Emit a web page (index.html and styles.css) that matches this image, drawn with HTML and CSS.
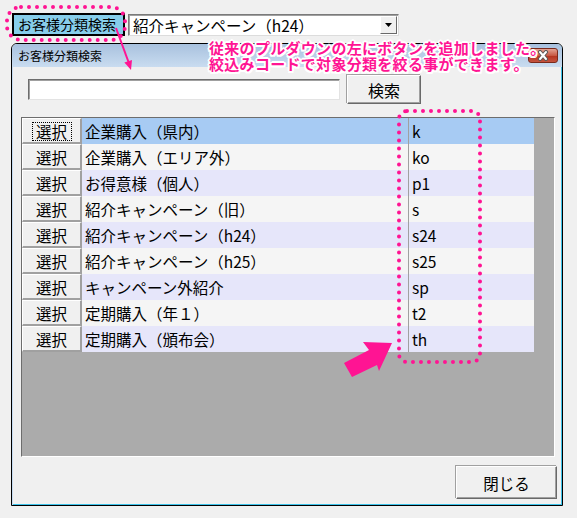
FILE: index.html
```html
<!DOCTYPE html>
<html lang="ja">
<head>
<meta charset="utf-8">
<title>お客様分類検索</title>
<link rel="stylesheet" href="styles.css">
</head>
<body>
<div class="toolbar">
  <button class="cat-btn">お客様分類検索</button>
  <div class="combo">
    <span class="combo-text">紹介キャンペーン（h24）</span>
    <span class="combo-arrow"><svg width="9" height="5" viewBox="0 0 9 5"><polygon points="1,0 8,0 4.5,4" fill="#000"/></svg></span>
  </div>
</div>

<div class="window">
  <div class="titlebar">
    <span class="title">お客様分類検索</span>
    <span class="close-x"><svg width="14" height="11" viewBox="0 0 14 11"><g stroke-linecap="round"><line x1="4" y1="2" x2="10" y2="9" stroke="#5a5a5a" stroke-width="4"/><line x1="10" y1="2" x2="4" y2="9" stroke="#5a5a5a" stroke-width="4"/><line x1="4" y1="2" x2="10" y2="9" stroke="#fff" stroke-width="2"/><line x1="10" y1="2" x2="4" y2="9" stroke="#fff" stroke-width="2"/></g></svg></span>
  </div>
  <div class="client">
    <div class="search-row">
      <div class="search-input"></div>
      <button class="btn search-btn">検索</button>
    </div>
    <div class="grid">
      <div class="row sel"><button class="pick"><span class="focus">選択</span></button><div class="name">企業購入（県内）</div><div class="code">k</div></div>
      <div class="row odd"><button class="pick">選択</button><div class="name">企業購入（エリア外）</div><div class="code">ko</div></div>
      <div class="row even"><button class="pick">選択</button><div class="name">お得意様（個人）</div><div class="code">p1</div></div>
      <div class="row odd"><button class="pick">選択</button><div class="name">紹介キャンペーン（旧）</div><div class="code">s</div></div>
      <div class="row even"><button class="pick">選択</button><div class="name">紹介キャンペーン（h24）</div><div class="code">s24</div></div>
      <div class="row odd"><button class="pick">選択</button><div class="name">紹介キャンペーン（h25）</div><div class="code">s25</div></div>
      <div class="row even"><button class="pick">選択</button><div class="name">キャンペーン外紹介</div><div class="code">sp</div></div>
      <div class="row odd"><button class="pick">選択</button><div class="name">定期購入（年１）</div><div class="code">t2</div></div>
      <div class="row even"><button class="pick">選択</button><div class="name">定期購入（頒布会）</div><div class="code">th</div></div>
    </div>
    <div class="footer">
      <button class="btn close-btn">閉じる</button>
    </div>
  </div>
</div>

<svg class="overlay" width="577" height="518" viewBox="0 0 577 518">
  <g fill="none" stroke="#ff1493" stroke-width="4" stroke-linecap="round" stroke-dasharray="0 8">
    <rect x="7" y="7" width="118" height="33" rx="14"/>
    <rect x="399" y="111" width="81" height="251" rx="8"/>
  </g>
  <line x1="116" y1="28" x2="128.5" y2="62" stroke="#ff1493" stroke-width="2"/>
  <polygon points="131,70 132,60 124.4,62.6" fill="#ff1493"/>
  <polygon points="344,363 369,350 363,342 392,343 379,371 377,365 352,377" fill="#ff1493"/>
</svg>

<div class="note">従来のプルダウンの左にボタンを追加しました。<br>絞込みコードで対象分類を絞る事ができます。</div>
</body>
</html>
```

FILE: styles.css
```css
* { box-sizing: border-box; }

body {
  margin: 0;
  width: 577px;
  height: 518px;
  overflow: hidden;
  position: relative;
  background: #f0f0f0;
  font-family: "Noto Sans CJK JP", "Noto Sans", sans-serif;
  color: #000;
}

button {
  font-family: inherit;
  color: #000;
  padding: 0;
  margin: 0;
  cursor: default;
}

.toolbar {
  display: flex;
  align-items: flex-start;
  gap: 3px;
  padding: 13px 0 0 12px;
  height: 36px;
}

.cat-btn {
  width: 113px;
  height: 23px;
  background: #87ceeb;
  border: 2px solid #000;
  font-size: 14px;
  line-height: 19px;
  text-align: left;
  padding-left: 4px;
}

.combo {
  width: 271px;
  height: 22px;
  margin-top: 1px;
  background: #fff;
  border: 1px solid #7a7a7a;
  border-right-color: #dcdcdc;
  border-bottom-color: #dcdcdc;
  box-shadow: inset 1px 1px 0 #a0a0a0;
  display: flex;
  align-items: stretch;
}

.combo-text {
  flex: 1;
  font-size: 15.5px;
  line-height: 20px;
  padding-left: 4px;
  white-space: nowrap;
}

.combo-arrow {
  width: 17px;
  margin: 1px 1px 1px 0;
  background: #f0f0f0;
  border: 1px solid;
  border-color: #fff #696969 #696969 #fff;
  display: flex;
  align-items: center;
  justify-content: center;
}

.window {
  margin: 7px 0 0 11px;
  width: 552px;
  height: 463px;
  border: 1px solid #000;
  border-radius: 6px 6px 0 0;
  background: #f0f0f0;
  display: flex;
  flex-direction: column;
  overflow: hidden;
  box-shadow: inset -1px -1px 0 #3cc3ea;
}

.titlebar {
  height: 23px;
  flex: none;
  background: linear-gradient(#a8c1de, #c9dcf0);
  display: flex;
  justify-content: space-between;
  align-items: flex-start;
  padding: 0 4px 0 6px;
}

.title {
  font-size: 12px;
  line-height: 23px;
}

.close-x {
  margin-top: 4px;
  width: 30px;
  height: 15px;
  border: 1px solid #7b2a1c;
  border-radius: 3px;
  background: linear-gradient(#e4a394, #c85a45 50%, #b4321e 51%, #c45540);
  display: flex;
  align-items: center;
  justify-content: center;
}

.client {
  flex: 1;
  display: flex;
  flex-direction: column;
  padding: 8px 5px 6px 8px;
  border-left: 1px solid #c6dcf2;
}

.search-row {
  display: flex;
  align-items: center;
  gap: 7px;
  margin-left: 7px;
  height: 29px;
}

.search-input {
  width: 312px;
  height: 21px;
  background: #fff;
  border: 1px solid;
  border-color: #6d6d6d #e3e3e3 #e3e3e3 #6d6d6d;
  box-shadow: inset 1px 1px 0 #a0a0a0;
}

.btn {
  background: #f0f0f0;
  border: 1px solid;
  border-color: #fff #696969 #696969 #fff;
  box-shadow: inset -1px -1px 0 #a0a0a0, -1px -1px 0 #a0a0a0;
}

.search-btn {
  width: 74px;
  height: 29px;
  font-size: 16px;
  line-height: 26px;
}

.grid {
  margin-top: 13px;
  width: 534px;
  height: 340px;
  background: #ababab;
  border: 1px solid;
  border-color: #6d6d6d #fff #fff #6d6d6d;
  display: flex;
  flex-direction: column;
}

.row {
  width: 512px;
  height: 26px;
  display: flex;
  font-size: 15.5px;
}

.row.odd { background: #f5f5f5; }
.row.even { background: #e6e6fa; }
.row.sel { background: #a7cbf3; }

.pick {
  width: 60px;
  height: 26px;
  flex: none;
  background: #f0f0f0;
  border-style: solid;
  border-width: 1px 2px 2px 1px;
  border-color: #fff #a0a0a0 #a0a0a0 #fff;
  font-size: 15.5px;
  line-height: 22px;
}

.focus {
  display: inline-block;
  width: 40px;
  height: 19px;
  line-height: 17px;
  border: 1px dotted #000;
}

.name {
  width: 326px;
  flex: none;
  padding-left: 3px;
  line-height: 26px;
  white-space: nowrap;
}

.code {
  flex: 1;
  border-left: 1px solid #a0a0a0;
  padding-left: 3px;
  line-height: 26px;
}

.footer {
  margin-top: 9px;
  display: flex;
  justify-content: flex-end;
}

.close-btn {
  width: 101px;
  height: 33px;
  font-size: 15.5px;
  line-height: 30px;
}

.overlay {
  position: absolute;
  left: 0;
  top: 0;
  pointer-events: none;
}

.note {
  position: absolute;
  left: 209px;
  top: 40px;
  font-size: 15px;
  line-height: 15.5px;
  font-weight: 700;
  letter-spacing: 0.3px;
  color: #ff1493;
  white-space: nowrap;
  text-shadow:
    -2px 0 #fff, 2px 0 #fff, 0 -2px #fff, 0 2px #fff,
    -1.5px -1.5px #fff, 1.5px 1.5px #fff, -1.5px 1.5px #fff, 1.5px -1.5px #fff;
}
```
